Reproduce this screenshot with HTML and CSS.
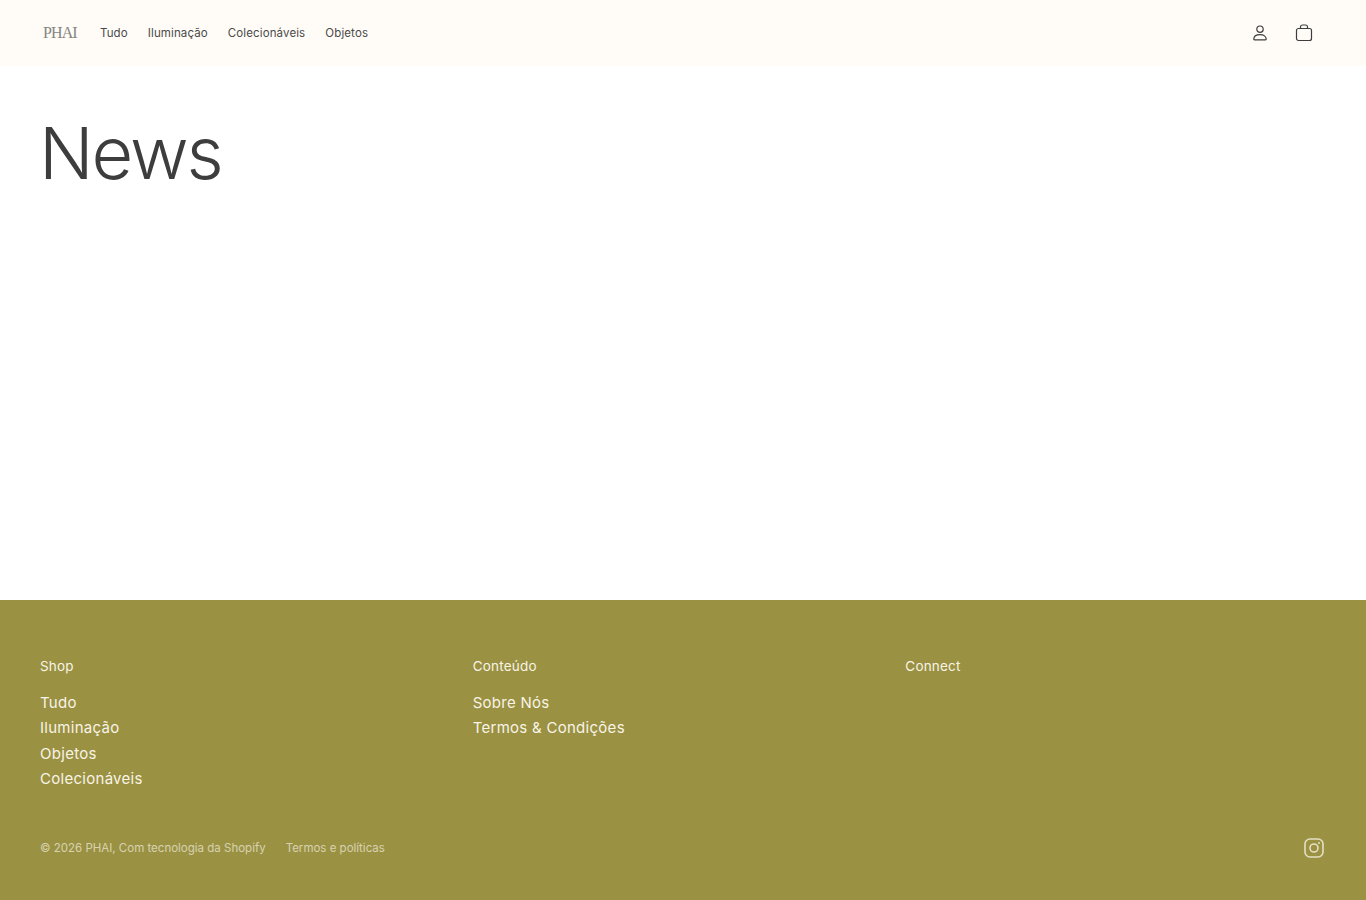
FILE: index.html
```html
<!DOCTYPE html>
<html lang="pt">
<head>
    <meta charset="UTF-8">
    <meta name="viewport" content="width=device-width, initial-scale=1.0">
    <title>News – PHAI</title>
    <link rel="stylesheet" href="styles.css">
</head>
<body>
    <header class="site-header">
        <a class="logo" href="#">PHAI</a>
        <nav class="main-nav">
            <a href="#">Tudo</a>
            <a href="#">Iluminação</a>
            <a href="#">Colecionáveis</a>
            <a href="#">Objetos</a>
        </nav>
        <div class="header-icons">
            <a href="#" aria-label="Conta">
                <svg width="18" height="18" viewBox="0 0 18 18" fill="none" stroke="#3d3d3d" stroke-width="1.2">
                    <circle cx="9" cy="5.2" r="3.2"/>
                    <path d="M2.8 15.3c0-3 2.4-4.6 6.2-4.6s6.200 1.600 6.200 4.600c0 .4-.2.500-.6.500H3.400c-.4 0-.6-.1-.6-.5z"/>
                </svg>
            </a>
            <a href="#" aria-label="Carrinho">
                <svg width="18" height="18" viewBox="0 0 18 18" fill="none" stroke="#3d3d3d" stroke-width="1.2">
                    <rect x="1.500" y="4.500" width="15" height="12" rx="2"/>
                    <path d="M5.500 4.500V3c0-1.200.8-2 2-2h3c1.200 0 2 .8 2 2v1.500"/>
                </svg>
            </a>
        </div>
    </header>

    <main class="page-content">
        <h1>News</h1>
    </main>

    <footer class="site-footer">
        <div class="footer-columns">
            <div class="footer-col">
                <h2>Shop</h2>
                <ul>
                    <li><a href="#">Tudo</a></li>
                    <li><a href="#">Iluminação</a></li>
                    <li><a href="#">Objetos</a></li>
                    <li><a href="#">Colecionáveis</a></li>
                </ul>
            </div>
            <div class="footer-col">
                <h2>Conteúdo</h2>
                <ul>
                    <li><a href="#">Sobre Nós</a></li>
                    <li><a href="#">Termos &amp; Condições</a></li>
                </ul>
            </div>
            <div class="footer-col">
                <h2>Connect</h2>
            </div>
        </div>
        <div class="footer-bottom">
            <div class="legal">
                <span>© 2026 PHAI, Com tecnologia da Shopify</span>
                <a href="#">Termos e políticas</a>
            </div>
            <a class="social" href="#" aria-label="Instagram">
                <svg width="20" height="20" viewBox="0 0 20 20" fill="none" stroke="#f3eedc" stroke-width="1.600">
                    <rect x="1" y="1" width="18" height="18" rx="5"/>
                    <circle cx="10" cy="10" r="4"/>
                    <circle cx="15" cy="5" r="1" fill="#f3eedc" stroke="none"/>
                </svg>
            </a>
        </div>
    </footer>
</body>
</html>
```

FILE: styles.css
```css
:root {
    --text-color: #3d3d3d;
    --header-color: #fffcf7;
    --footer-color: #9a9142;
    --footer-text: #f8f4e6;
}

* {
    margin: 0;
    padding: 0;
    box-sizing: border-box;
}

body {
    font-family: Inter, "Liberation Sans", sans-serif;
    color: var(--text-color);
    background-color: white;
}

a {
    color: inherit;
    text-decoration: none;
}

ul {
    list-style: none;
}

.site-header {
    display: flex;
    align-items: center;
    height: 66px;
    padding: 0 44px 0 43px;
    background-color: var(--header-color);
}

.logo {
    font-family: "Liberation Serif", serif;
    font-size: 16px;
    letter-spacing: -0.9px;
    color: #85857f;
    width: 57px;
}

.main-nav {
    display: flex;
    gap: 20px;
    font-size: 11.500px;
    letter-spacing: 0.12px;
    color: #4a4a4a;
}

.header-icons {
    display: flex;
    gap: 26px;
    margin-left: auto;
    margin-right: 9px;
}

.header-icons a {
    display: flex;
}

.page-content {
    height: 534px;
    padding: 46px 40px 0 39px;
}

h1 {
    font-size: 72px;
    font-weight: 350;
    letter-spacing: -2.100px;
    line-height: 82px;
}

.site-footer {
    height: 300px;
    padding: 58px 40px 0;
    background-color: var(--footer-color);
    color: var(--footer-text);
}

.footer-columns {
    display: grid;
    grid-template-columns: repeat(3, 1fr);
    column-gap: 12px;
    height: 180px;
}

.footer-col h2 {
    font-size: 13.500px;
    font-weight: 400;
    letter-spacing: 0.2px;
    line-height: 16px;
    margin-bottom: 16px;
}

.footer-col li {
    font-size: 15px;
    letter-spacing: 0.28px;
    line-height: 25.400px;
}

.footer-bottom {
    display: flex;
    align-items: center;
    justify-content: space-between;
}

.legal {
    display: flex;
    gap: 20px;
    font-size: 11.500px;
    opacity: 0.65;
}

.social {
    display: flex;
    margin-right: 2px;
    opacity: 0.85;
}
```
